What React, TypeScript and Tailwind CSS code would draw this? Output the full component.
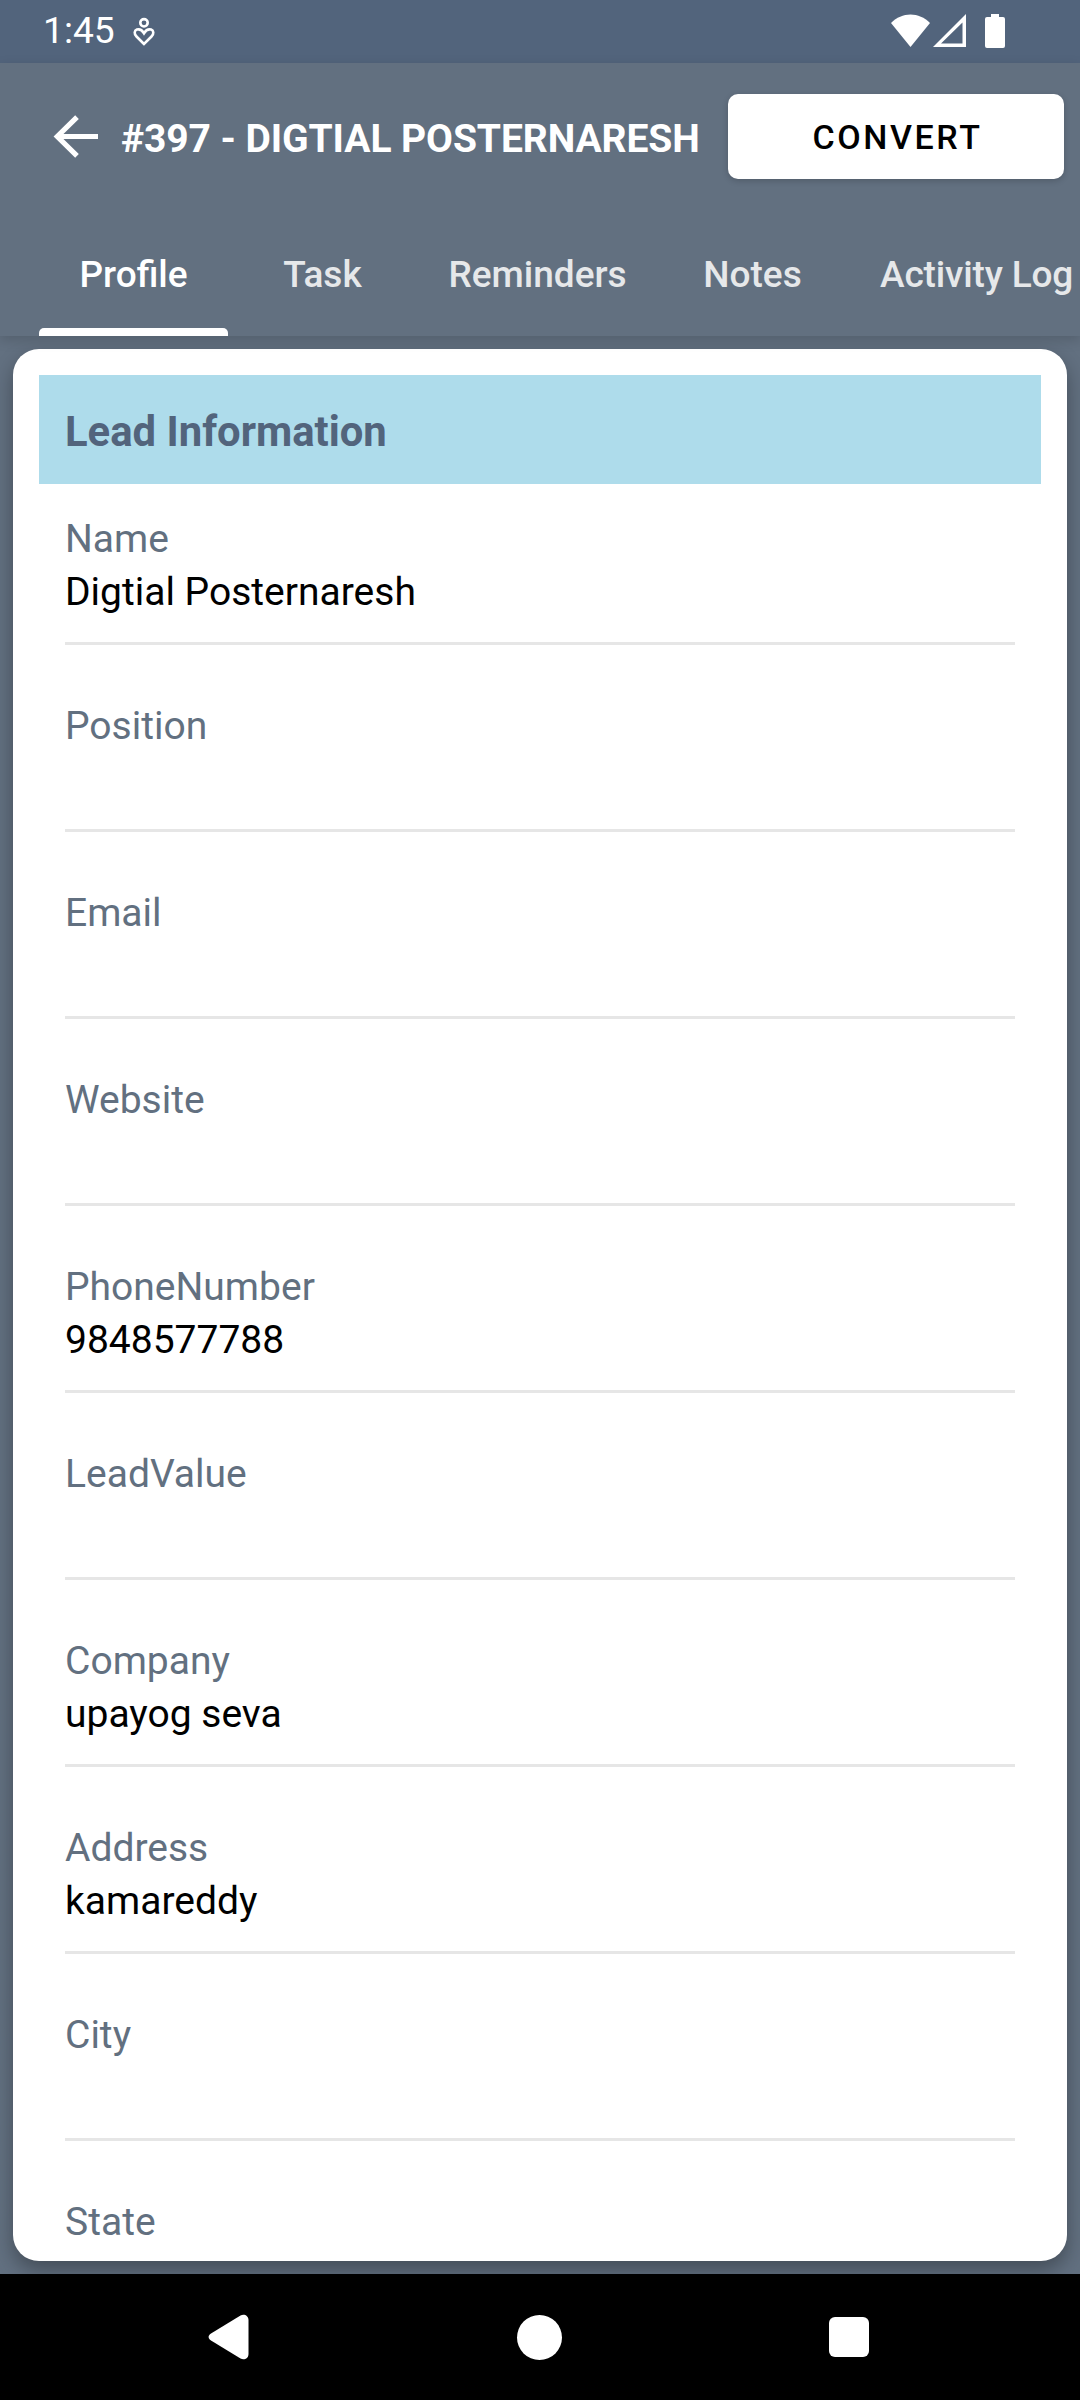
const fields = [
  { label: 'Name', value: 'Digtial Posternaresh' },
  { label: 'Position', value: '' },
  { label: 'Email', value: '' },
  { label: 'Website', value: '' },
  { label: 'PhoneNumber', value: '9848577788' },
  { label: 'LeadValue', value: '' },
  { label: 'Company', value: 'upayog seva' },
  { label: 'Address', value: 'kamareddy' },
  { label: 'City', value: '' },
  { label: 'State', value: '' },
];

function StatusBar() {
  return (
    <div className="flex h-[63px] shrink-0 items-start bg-[#52647c] pl-[43px] text-white">
      <span className="mt-[9px] w-[90px] text-[37.2px] leading-[43px] whitespace-nowrap">1:45</span>
      <svg className="mt-[17px] h-[30px] w-[22px]" viewBox="0 0 22 30" fill="none" stroke="white" strokeWidth="2.6">
        <circle cx="11" cy="5.8" r="3.7" />
        <path d="M11 27 3.5 19.5C.8 16.8 1.3 13.5 3.9 12.6 6.6 11.8 9 13 11 16.2 13 13 15.4 11.8 18.1 12.6 20.7 13.5 21.2 16.8 18.5 19.5Z" />
      </svg>
      <div className="ml-auto flex pr-[75px]">
        <svg className="mt-[13px] h-[35px] w-[40px]" viewBox="0 0 40 35" fill="white">
          <path d="M0 10C11-1.5 28-1.5 39 10L19.5 34Z" />
        </svg>
        <svg className="mt-[13px] ml-[2px] h-[35px] w-[34px]" viewBox="0 0 34 35" fill="white" fillRule="evenodd">
          <path d="M0 34 33 1V34ZM8 30.5H29.5V9.5Z" />
        </svg>
        <svg className="mt-[14px] ml-[18px] h-[34px] w-[20px]" viewBox="0 0 20 34" fill="white">
          <path d="M6 0H14V3H18Q20 3 20 5V32Q20 34 18 34H2Q0 34 0 32V5Q0 3 2 3H6Z" />
        </svg>
      </div>
    </div>
  );
}

function Header() {
  return (
    <header className="relative flex h-[273px] shrink-0 flex-col bg-[#627080] text-white shadow-[0_4px_12px_rgba(0,0,0,0.15)]">
      <div className="flex h-[147px] items-start pt-[31px] pl-[53px]">
        <svg className="mt-[21px] h-[43px] w-[46px]" viewBox="0 0 46 43" fill="none" stroke="white" strokeWidth="5.2">
          <path d="M24 2.2 4.3 21.5 24 40.8M3.5 21.5H45" />
        </svg>
        <h1 className="mt-[22px] ml-[22px] w-[607px] text-[39px] leading-[46px] font-bold tracking-[-0.08px] whitespace-nowrap">
          #397 - DIGTIAL POSTERNARESH
        </h1>
        <button className="flex h-[85px] w-[336px] items-center justify-center rounded-[10px] bg-white pl-[3px] text-[34px] leading-[40px] font-medium tracking-[2.6px] text-black shadow-[0_2px_6px_rgba(0,0,0,0.18)]">
          CONVERT
        </button>
      </div>
      <nav className="flex h-[126px] overflow-hidden pl-[39px] text-[37px] leading-[44px] font-medium whitespace-nowrap text-[#e6e8ea]">
        <div className="flex w-[189px] flex-col justify-between text-center text-white">
          <span className="mt-[43px]">Profile</span>
          <span className="h-[8px] rounded-t-[5px] bg-white" />
        </div>
        <span className="mt-[43px] w-[189px] text-center">Task</span>
        <span className="mt-[43px] w-[241px] text-center">Reminders</span>
        <span className="mt-[43px] w-[189px] text-center">Notes</span>
        <span className="mt-[43px] ml-[33px] tracking-[-0.15px]">Activity Log</span>
      </nav>
    </header>
  );
}

function Field({ label, value }: { label: string; value: string }) {
  return (
    <div className="mx-[26px] mb-[26px] border-b-[3px] border-[#e6e6e6] pt-[32px] pb-[27px] text-[39px] leading-[46px]">
      <div className="text-[#627080]">{label}</div>
      <div className="mt-[7px] h-[46px] text-black">{value}</div>
    </div>
  );
}

function NavigationBar() {
  return (
    <div className="relative flex h-[126px] shrink-0 items-center bg-black pl-[208px]">
      <svg className="h-[46px] w-[42px]" viewBox="0 0 42 46" fill="white">
        <path d="M32.5 1.5C36 -.6 40.5 1.5 40.5 6V40C40.5 44.5 36 46.6 32.5 44.5L3 26.5C-.2 24.5-.2 21.5 3 19.5Z" />
      </svg>
      <div className="ml-[267px] size-[45px] rounded-full bg-white" />
      <div className="ml-[267px] size-[40px] rounded-[6px] bg-white" />
    </div>
  );
}

export default function App() {
  return (
    <div className="flex h-[2400px] w-[1080px] flex-col overflow-hidden bg-[#627080] font-[Roboto,sans-serif]">
      <StatusBar />
      <Header />
      <main className="h-[1938px] shrink-0 overflow-hidden p-[13px]">
        <section className="h-[1912px] rounded-[26px] bg-white shadow-[0_9px_20px_rgba(0,0,0,0.32)]">
          <div className="h-full overflow-hidden rounded-[26px] p-[26px]">
            <h2 className="h-[109px] bg-[#aedceb] pt-[32px] pl-[26px] text-[41.8px] leading-[49px] font-bold text-[#52647c]">
              Lead Information
            </h2>
            {fields.map((f) => (
              <Field key={f.label} label={f.label} value={f.value} />
            ))}
          </div>
        </section>
      </main>
      <NavigationBar />
    </div>
  );
}
